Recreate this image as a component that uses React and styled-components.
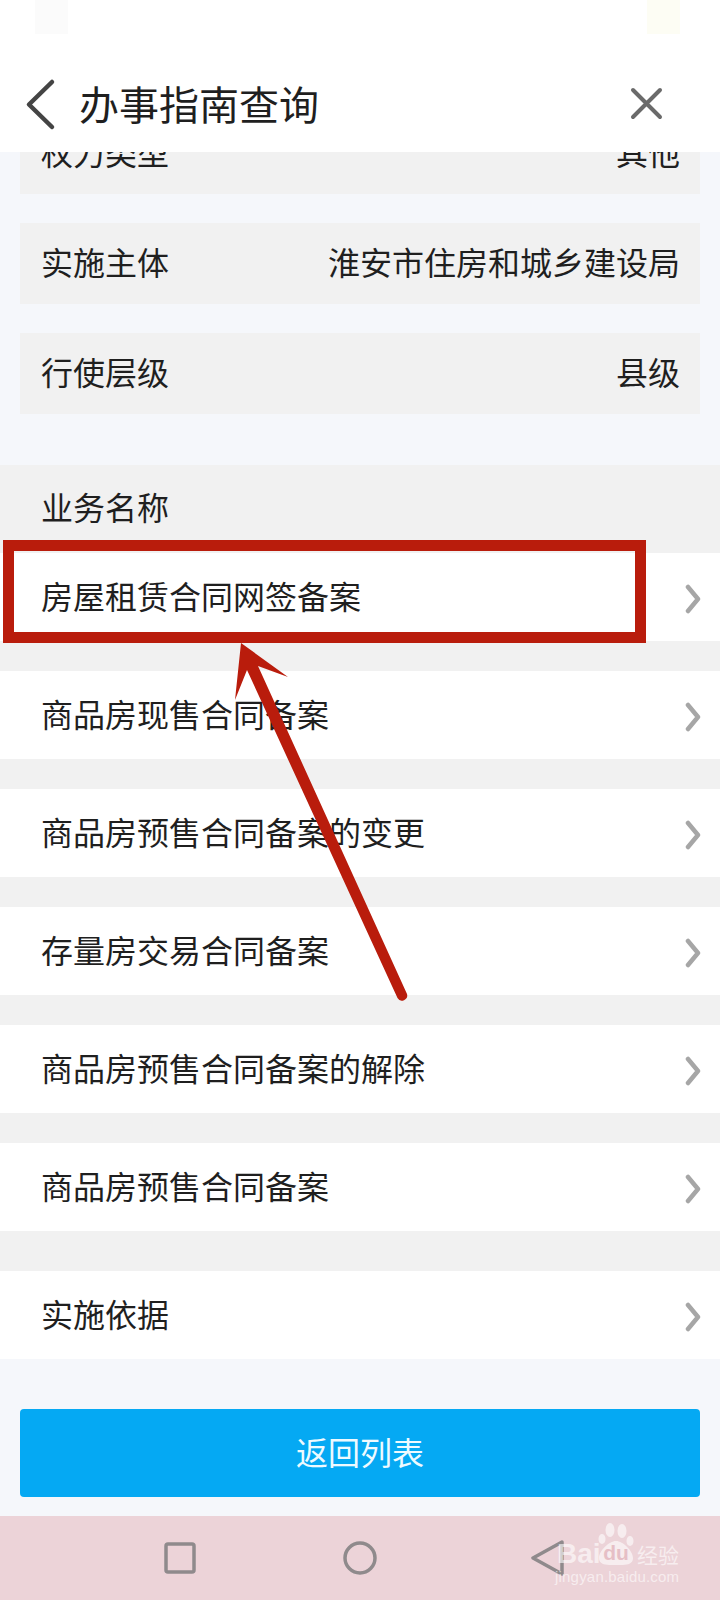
import React from 'react';
import styled, { createGlobalStyle } from 'styled-components';

const infoRows = [
    ['权力类型', '其他'],
    ['实施主体', '淮安市住房和城乡建设局'],
    ['行使层级', '县级'],
];

const businessRows = [
    '房屋租赁合同网签备案',
    '商品房现售合同备案',
    '商品房预售合同备案的变更',
    '存量房交易合同备案',
    '商品房预售合同备案的解除',
    '商品房预售合同备案',
];

function Chevron() {
    return (
        <ChevronIcon width="16" height="30" viewBox="0 0 16 30">
            <path d="M3 3 L13 15 L3 27" />
        </ChevronIcon>
    );
}

function App() {
    return (
        <Page>
            <GlobalStyle />
            <Header>
                <StatusBar>
                    <Ghost />
                    <Ghost $tint="#fdfdf4" />
                </StatusBar>
                <TitleBar>
                    <BackIcon width="40" height="60" viewBox="0 0 40 60">
                        <path d="M32 7 L9 29.5 L32 52" />
                    </BackIcon>
                    <Title>办事指南查询</Title>
                    <CloseIcon width="40" height="40" viewBox="0 0 40 40">
                        <path d="M6 5 L33 32 M33 5 L6 32" />
                    </CloseIcon>
                </TitleBar>
            </Header>

            <Scroller>
                <ScrollContent>
                    <InfoList>
                        {infoRows.map(([label, value]) => (
                            <InfoRow key={label}>
                                <span>{label}</span>
                                <span>{value}</span>
                            </InfoRow>
                        ))}
                    </InfoList>

                    <Section>
                        <SectionTitle>业务名称</SectionTitle>
                        <LinkList>
                            {businessRows.map((name) => (
                                <LinkRow key={name}>
                                    {name}
                                    <Chevron />
                                </LinkRow>
                            ))}
                        </LinkList>
                        <LinkRow $apart>
                            实施依据
                            <Chevron />
                        </LinkRow>
                    </Section>

                    <BackButton>返回列表</BackButton>
                </ScrollContent>
            </Scroller>

            <NavBar>
                <svg width="36" height="36" viewBox="0 0 36 36">
                    <NavShape as="rect" x="4" y="4" width="28" height="28" rx="2" />
                </svg>
                <svg width="36" height="36" viewBox="0 0 36 36">
                    <NavShape as="circle" cx="18" cy="18" r="15" />
                </svg>
                <svg width="36" height="36" viewBox="0 0 36 36">
                    <NavShape as="path" d="M33 2 L4 18 L33 34 Z" />
                </svg>
            </NavBar>

            <Highlight />
            <ArrowMark width="200" height="370" viewBox="230 640 200 370">
                <path d="M241 643 L288 677 L258 666 L407 994 A5.2 5.2 0 0 1 397.5 998 L247 670 L235 700 Z" />
            </ArrowMark>

            <Watermark>
                <BrandLine>
                    <BrandWord>Bai</BrandWord>
                    <Paw>
                        <svg width="36" height="43" viewBox="0 0 36 43">
                            <ellipse cx="4" cy="17" rx="3.5" ry="5" />
                            <ellipse cx="12" cy="8" rx="4.5" ry="7" />
                            <ellipse cx="24" cy="9" rx="4.5" ry="7" />
                            <ellipse cx="32" cy="19" rx="3.5" ry="5" />
                            <path d="M18 19 C25 19 35 29 35 36 C35 44 25 43 18 43 C11 43 1 44 1 36 C1 29 11 19 18 19 Z" />
                        </svg>
                        <PawWord>du</PawWord>
                    </Paw>
                    <BrandCjk>经验</BrandCjk>
                </BrandLine>
                <BrandUrl>jingyan.baidu.com</BrandUrl>
            </Watermark>
        </Page>
    );
}

const GlobalStyle = createGlobalStyle`
body{
    margin:0;
    background:#f5f7fb;
    font-family:"Noto Sans CJK SC","Noto Sans",sans-serif;
}
`;

const Page = styled.div`
position:relative;
width:720px;
height:1600px;
display:flex;
flex-direction:column;
overflow:hidden;
color:#1f1f1f;
background:#f5f7fb;
`;

const Header = styled.header`
flex:none;
height:152px;
background:#fff;
`;

const StatusBar = styled.div`
height:58px;
display:flex;
justify-content:space-between;
padding:0 40px 0 35px;
`;

const Ghost = styled.div`
width:33px;
height:34px;
background:${(props) => props.$tint || '#fbfbfb'};
`;

const TitleBar = styled.div`
height:94px;
display:flex;
align-items:center;
padding:0 53px 0 20px;
`;

const BackIcon = styled.svg`
flex:none;
margin-right:19px;
path{
    fill:none;
    stroke:#444;
    stroke-width:4.5;
    stroke-linecap:round;
    stroke-linejoin:round;
}
`;

const Title = styled.h1`
flex:1;
margin:0;
padding-bottom:4px;
font-size:40px;
font-weight:400;
line-height:48px;
`;

const CloseIcon = styled.svg`
flex:none;
path{
    fill:none;
    stroke:#6a6a6a;
    stroke-width:4;
    stroke-linecap:round;
}
`;

const Scroller = styled.main`
flex:1;
min-height:0;
overflow:hidden;
`;

/* the page is scrolled: the first row sits partly under the header */
const ScrollContent = styled.div`
margin-top:-39px;
`;

const InfoList = styled.div`
display:flex;
flex-direction:column;
gap:29px;
padding:0 20px;
`;

const InfoRow = styled.div`
height:81px;
box-sizing:border-box;
display:flex;
align-items:center;
justify-content:space-between;
padding:0 20px 6px 21px;
background:#f1f1f1;
font-size:32px;
`;

const Section = styled.section`
margin-top:51px;
background:#f1f1f1;
`;

const SectionTitle = styled.h2`
height:88px;
margin:0;
padding-left:41px;
font-size:32px;
font-weight:400;
line-height:82px;
`;

const LinkList = styled.div`
display:flex;
flex-direction:column;
gap:30px;
`;

const LinkRow = styled.div`
height:88px;
box-sizing:border-box;
margin-top:${(props) => (props.$apart ? '40px' : '0')};
display:flex;
align-items:center;
justify-content:space-between;
padding:0 19px 4px 41px;
background:#fff;
font-size:32px;
`;

const ChevronIcon = styled.svg`
flex:none;
margin-top:8px;
path{
    fill:none;
    stroke:#a6a6a6;
    stroke-width:4.5;
    stroke-linecap:round;
    stroke-linejoin:round;
}
`;

const BackButton = styled.button`
display:block;
width:680px;
height:88px;
margin:50px 20px 0;
padding:0 0 4px;
border:0;
border-radius:4px;
background:#05a9f3;
color:#eefaff;
font-family:inherit;
font-size:32px;
`;

const NavBar = styled.nav`
flex:none;
height:84px;
display:flex;
align-items:center;
gap:144px;
padding-left:162px;
background:#ecd3d8;
svg:last-child{
    margin-left:7px;
}
`;

const NavShape = styled.rect`
fill:none;
stroke:#8f8a8c;
stroke-width:3.5;
stroke-linecap:round;
stroke-linejoin:round;
`;

const Highlight = styled.div`
position:absolute;
left:3px;
top:540px;
width:643px;
height:103px;
box-sizing:border-box;
border:solid #b91c0c;
border-width:11px;
`;

const ArrowMark = styled.svg`
position:absolute;
left:230px;
top:640px;
path{
    fill:#b91c0c;
}
`;

const Watermark = styled.div`
position:absolute;
left:555px;
top:1522px;
width:130px;
color:rgba(255,255,255,0.6);
`;

const BrandLine = styled.div`
display:flex;
align-items:flex-end;
height:43px;
`;

const BrandWord = styled.span`
width:41px;
margin-left:2px;
font-family:"Liberation Sans",sans-serif;
font-size:28px;
font-weight:700;
line-height:22px;
`;

const Paw = styled.div`
position:relative;
flex:none;
width:36px;
height:43px;
svg{
    display:block;
    fill:rgba(255,255,255,0.6);
}
`;

const PawWord = styled.span`
position:absolute;
left:0;
right:0;
bottom:2px;
text-align:center;
font-family:"Liberation Sans",sans-serif;
font-size:21px;
font-weight:700;
line-height:20px;
color:#e6bfc6;
`;

const BrandCjk = styled.span`
margin-left:3px;
font-size:21px;
line-height:22px;
white-space:nowrap;
`;

const BrandUrl = styled.div`
margin-top:2px;
font-family:"Liberation Sans",sans-serif;
font-size:15px;
line-height:20px;
letter-spacing:0.2px;
white-space:nowrap;
`;

export default App;
